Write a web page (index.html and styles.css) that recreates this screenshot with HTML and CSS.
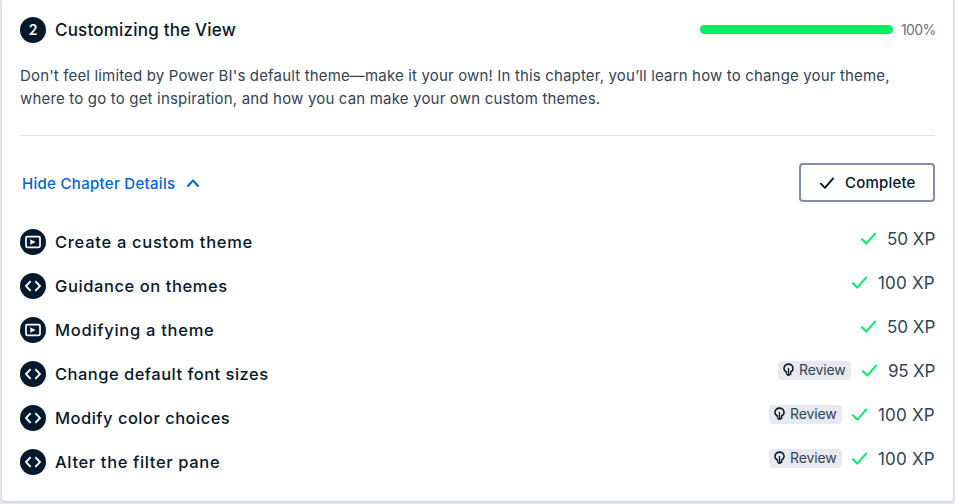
FILE: index.html
```html
<!DOCTYPE html>
<html lang="en">
<head>
<meta charset="utf-8">
<title>Customizing the View</title>
<link rel="stylesheet" href="styles.css">
</head>
<body>
<svg width="0" height="0" class="sprite" aria-hidden="true">
  <symbol id="video" viewBox="0 0 26 26"><circle cx="13" cy="13" r="13" fill="#05192d"/><rect x="6" y="7.7" width="14" height="10.6" rx="1.2" fill="none" stroke="#fff" stroke-width="1.7"/><path d="M10.3 10.2v5.6l5.2-2.8z" fill="#fff"/></symbol>
  <symbol id="code" viewBox="0 0 26 26"><circle cx="13" cy="13" r="13" fill="#05192d"/><path d="M10.2 8.7 6 13l4.2 4.3M15.8 8.7l4.2 4.3-4.2 4.3" fill="none" stroke="#fff" stroke-width="1.9" stroke-linecap="round" stroke-linejoin="round"/></symbol>
  <symbol id="check" viewBox="0 0 14 12"><path d="M.9 6.7 4.9 10.8 13.1 1.4" fill="none" stroke="currentColor" stroke-width="1.9" stroke-linecap="round" stroke-linejoin="round"/></symbol>
  <symbol id="bulb" viewBox="0 0 12 14"><path d="M3.7 10.7V9.2C2 8.3 1 7 1 5.3a5 4.7 0 0 1 10 0C11 7 10 8.3 8.3 9.2v2.3L6 12.8l-2.3-1.3" fill="none" stroke="currentColor" stroke-width="1.7" stroke-linejoin="round"/><path d="M6 4.7v7.5" stroke="currentColor" stroke-width="1.4"/></symbol>
</svg>
<main class="card">
  <header class="head">
    <span class="number">2</span>
    <h2 class="title">Customizing the View</h2>
    <div class="progress"><div class="fill"></div></div>
    <span class="percent">100%</span>
  </header>
  <p class="desc"><span class="line1">Don't feel limited by Power BI's default theme—make it your own! In this chapter, you’ll learn how to change your theme,</span><br><span class="line2">where to go to get inspiration, and how you can make your own custom themes.</span></p>
  <div class="actions">
    <a class="toggle"><span>Hide Chapter Details</span><svg width="12" height="8" viewBox="0 0 12 8"><path d="M1 7 6 1.4 11 7" fill="none" stroke="currentColor" stroke-width="2" stroke-linecap="round" stroke-linejoin="round"/></svg></a>
    <button class="complete"><svg width="14" height="12"><use href="#check"/></svg><span>Complete</span></button>
  </div>
  <ul class="list">
    <li><svg class="kind"><use href="#video"/></svg><span class="name n1">Create a custom theme</span><svg class="tick"><use href="#check"/></svg><span class="xp">50 XP</span></li>
    <li><svg class="kind"><use href="#code"/></svg><span class="name n2">Guidance on themes</span><svg class="tick"><use href="#check"/></svg><span class="xp hundred">100 XP</span></li>
    <li><svg class="kind"><use href="#video"/></svg><span class="name n3">Modifying a theme</span><svg class="tick"><use href="#check"/></svg><span class="xp">50 XP</span></li>
    <li><svg class="kind"><use href="#code"/></svg><span class="name n4">Change default font sizes</span><span class="review"><svg><use href="#bulb"/></svg><span>Review</span></span><svg class="tick"><use href="#check"/></svg><span class="xp ninety">95 XP</span></li>
    <li><svg class="kind"><use href="#code"/></svg><span class="name n5">Modify color choices</span><span class="review"><svg><use href="#bulb"/></svg><span>Review</span></span><svg class="tick"><use href="#check"/></svg><span class="xp hundred">100 XP</span></li>
    <li><svg class="kind"><use href="#code"/></svg><span class="name n6">Alter the filter pane</span><span class="review"><svg><use href="#bulb"/></svg><span>Review</span></span><svg class="tick"><use href="#check"/></svg><span class="xp hundred">100 XP</span></li>
  </ul>
</main>
</body>
</html>
```
FILE: styles.css
```css
* { box-sizing: border-box; }
body { margin: 0; padding: 0 2px; height: 504px; overflow: hidden; background: #e8e8ef; font-family: Inter, "Liberation Sans", sans-serif; color: #05192d; }
.sprite { position: absolute; }
.card { height: 501px; padding: 17px 18px 0; background: #fff; border-radius: 0 0 4px 4px; box-shadow: 0 1px 3px #c8cbd8; }
.head { display: flex; align-items: center; height: 26px; }
.number { width: 26px; height: 26px; border-radius: 50%; background: #05192d; color: #fff; font-size: 14px; font-weight: 600; line-height: 26px; text-align: center; }
.title { margin: 0 0 0 9px; font-size: 17px; font-weight: 500; line-height: 26px; letter-spacing: .21px; white-space: nowrap; }
.progress { width: 193px; height: 9px; margin-left: auto; margin-bottom: 1px; border-radius: 5px; background: #e8e8ef; }
.fill { width: 100%; height: 100%; border-radius: 5px; background: #03ef62; }
.percent { width: 34px; margin: 0 0 2px 8px; color: #6a7583; font-size: 14px; letter-spacing: -.65px; white-space: nowrap; }
.desc { height: 72px; margin: 21px 0 0; border-bottom: 1px solid #e1e1e8; color: #30445a; font-size: 15px; line-height: 23px; white-space: nowrap; }
.line1 { letter-spacing: .16px; }
.line2 { letter-spacing: .18px; }
.actions { display: flex; align-items: center; justify-content: space-between; height: 39px; margin-top: 27px; }
.toggle { display: flex; align-items: center; gap: 12px; padding: 1px 0 0 2px; color: #0065d1; font-size: 15px; font-weight: 500; letter-spacing: .3px; white-space: nowrap; }
.complete { display: flex; align-items: center; gap: 11px; width: 136px; height: 39px; padding: 0 0 0 19px; border: 2px solid #848baf; border-radius: 4px; background: #fff; color: #05192d; font: 500 15px Inter, sans-serif; letter-spacing: .2px; white-space: nowrap; }
.list { margin: 18px 0 0; padding: 0; list-style: none; }
.list li { display: flex; align-items: center; height: 44px; }
.kind { width: 26px; height: 26px; flex: none; }
.name { margin: 0 auto 0 9px; font-size: 16.5px; font-weight: 500; line-height: 26px; white-space: nowrap; }
.n1 { letter-spacing: .71px; }
.n2 { letter-spacing: .58px; }
.n3 { letter-spacing: .72px; }
.n4 { letter-spacing: .48px; }
.n5 { letter-spacing: .48px; }
.n6 { letter-spacing: .64px; }
.tick { width: 15px; height: 13px; flex: none; margin: -7px 11px 0 0; color: #03ef62; }
.xp { width: 48px; margin-top: -6px; color: #30445a; font-size: 17px; line-height: 24px; white-space: nowrap; }
.hundred { width: 57px; letter-spacing: .2px; }
.ninety { width: 47px; letter-spacing: -.2px; }
.review { display: flex; align-items: center; gap: 5px; width: 73px; height: 19px; margin: -8px 10px 0 0; padding-left: 5px; border-radius: 4px; background: #e8e8ef; color: #30445a; font-size: 14px; line-height: 17px; letter-spacing: -.1px; }
.review span { margin-top: -2px; }
.review svg { width: 11px; height: 14px; flex: none; color: #05192d; }
.review:has(~ .ninety) { margin-right: 11px; }
```
